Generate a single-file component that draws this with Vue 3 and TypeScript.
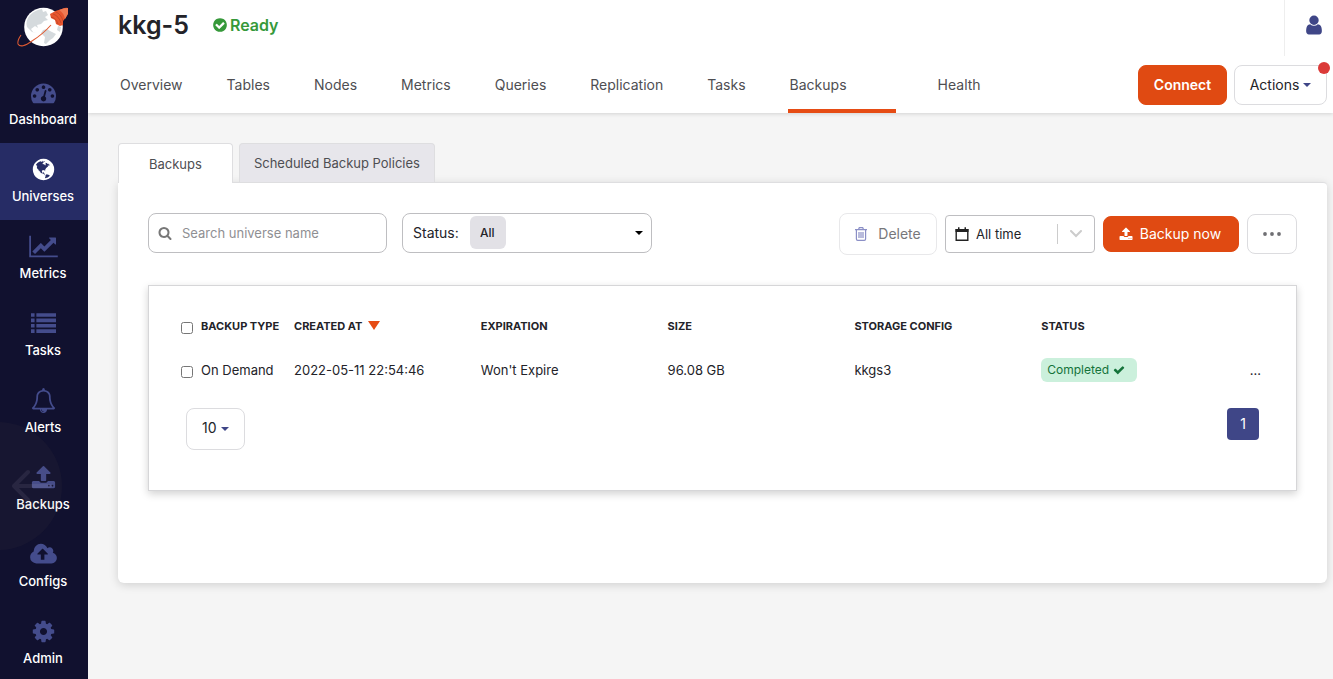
<script setup lang="ts">
import { ref, computed } from 'vue'

interface NavItem {
  label: string
  viewBox: string
  width: number
  path: string
  active?: boolean
}

interface Backup {
  type: string
  created: string
  expiration: string
  size: string
  config: string
  status: string
}

const icons = {
  upload:
    'M1344 1472q0-26-19-45t-45-19-45 19-19 45 19 45 45 19 45-19 19-45zm256 0q0-26-19-45t-45-19-45 19-19 45 19 45 45 19 45-19 19-45zm128-224v320q0 40-28 68t-68 28h-1472q-40 0-68-28t-28-68v-320q0-40 28-68t68-28h427q21 56 70.5 92t110.5 36h256q61 0 110.5-36t70.5-92h427q40 0 68 28t28 68zm-325-648q-17 40-59 40h-256v448q0 26-19 45t-45 19h-256q-26 0-45-19t-19-45v-448h-256q-42 0-59-40-17-39 14-69l448-448q18-19 45-19t45 19l448 448q31 30 14 69z',
  user:
    'M1536 1399q0 109-62.5 187t-150.5 78h-854q-88 0-150.5-78t-62.5-187q0-85 8.5-160.5t31.5-152 58.5-131 94-89 134.5-34.5q131 128 313 128t313-128q76 0 134.5 34.5t94 89 58.5 131 31.5 152 8.5 160.5zm-256-887q0 159-112.5 271.5t-271.5 112.5-271.5-112.5-112.5-271.5 112.5-271.5 271.5-112.5 271.5 112.5 112.5 271.5z',
  checkCircle:
    'M1412 734q0-28-18-46l-91-90q-19-19-45-19t-45 19l-408 407-226-226q-19-19-45-19t-45 19l-91 90q-18 18-18 46 0 27 18 45l362 362q19 19 45 19 27 0 46-19l543-543q18-18 18-45zm252 162q0 209-103 385.5t-279.5 279.5-385.5 103-385.5-103-279.5-279.5-103-385.5 103-385.5 279.5-279.5 385.5-103 385.5 103 279.5 279.5 103 385.5z',
  search:
    'M1216 832q0-185-131.5-316.5t-316.5-131.5-316.5 131.5-131.5 316.5 131.5 316.5 316.5 131.5 316.5-131.5 131.5-316.5zm512 832q0 52-38 90t-90 38q-54 0-90-38l-343-342q-179 124-399 124-143 0-273.5-55.5t-225-150-150-225-55.5-273.5 55.5-273.5 150-225 225-150 273.5-55.5 273.5 55.5 225 150 150 225 55.5 273.5q0 220-124 399l343 343q37 37 37 90z',
  check:
    'M1671 566q0 40-28 68l-724 724-136 136q-28 28-68 28t-68-28l-136-136-362-362q-28-28-28-68t28-68l136-136q28-28 68-28t68 28l294 295 656-657q28-28 68-28t68 28l136 136q28 28 28 68z',
}

const navItems: NavItem[] = [
  {
    label: 'Dashboard',
    viewBox: '0 0 1792 1792',
    width: 25,
    path: 'M384 1152q0-53-37.5-90.5t-90.5-37.5-90.5 37.5-37.5 90.5 37.5 90.5 90.5 37.5 90.5-37.5 37.5-90.5zm192-448q0-53-37.5-90.5t-90.5-37.5-90.5 37.5-37.5 90.5 37.5 90.5 90.5 37.5 90.5-37.5 37.5-90.5zm428 481l101-382q6-26-7.5-48.5t-38.5-29.5-48 6.5-30 39.5l-101 382q-60 5-107 43.5t-63 98.5q-20 77 20 146t117 89 146-20 89-117q16-60-6-117t-72-91zm660-33q0-53-37.5-90.5t-90.5-37.5-90.5 37.5-37.5 90.5 37.5 90.5 90.5 37.5 90.5-37.5 37.5-90.5zm-640-640q0-53-37.5-90.5t-90.5-37.5-90.5 37.5-37.5 90.5 37.5 90.5 90.5 37.5 90.5-37.5 37.5-90.5zm448 192q0-53-37.5-90.5t-90.5-37.5-90.5 37.5-37.5 90.5 37.5 90.5 90.5 37.5 90.5-37.5 37.5-90.5zm320 448q0 261-141 483-19 29-54 29h-1402q-35 0-54-29-141-221-141-483 0-182 71-348t191-286 286-191 348-71 348 71 286 191 191 286 71 348z',
  },
  {
    label: 'Universes',
    viewBox: '0 0 1792 1792',
    width: 25,
    active: true,
    path: 'M896 128q209 0 385.5 103t279.5 279.5 103 385.5-103 385.5-279.5 279.5-385.5 103-385.5-103-279.5-279.5-103-385.5 103-385.5 279.5-279.5 385.5-103zm274 521q-2 1-9.5 9.5t-13.5 9.5q2 0 4.5-5t5-11 3.5-7q6-7 22-15 14-6 52-12 34-8 51 11-2-2 9.5-13t14.5-12q3-2 15-4.5t15-7.5l2-22q-12 1-17.5-7t-6.5-21q0 2-6 8 0-7-4.5-8t-11.5 1-9 1q-10-3-15-7.5t-8-16.5-4-15q-2-5-9.5-11t-9.5-10q-1-2-2.5-5.5t-3-6.5-4-5.5-5.5-2.5-7 5-7.5 10-4.5 5q-3-2-6-1.5t-4.5 1-4.5 3-5 3.5q-3 2-8.5 3t-8.5 2q15-5-1-11-10-4-16-3 9-4 7.5-12t-8.5-14h5q-1-4-8.5-8.5t-17.5-8.5-13-6q-8-5-34-9.5t-33-.5q-5 6-4.5 10.5t4 14 3.5 12.5q1 6-5.5 13t-6.5 12q0 7 14 15.5t10 21.5q-3 8-16 16t-16 12q-5 8-1.5 18.5t10.5 16.5q2 2 1.5 4t-3.5 4.5-5.5 4-6.5 3.5l-3 2q-11 5-20.5-6t-13.5-26q-7-25-16-30-23-8-29 1-5-13-41-26-25-9-58-4 6-1 0-15-7-15-19-12 3-6 4-17.5t1-13.5q3-13 12-23 1-1 7-8.5t9.5-13.5.5-6q35 4 50-11 5-5 11.5-17t10.5-17q9-6 14-5.5t14.5 5.5 14.5 5q14 1 15.5-11t-7.5-20q12 1 3-17-4-7-8-9-12-4-27 5-8 4 2 8-1-1-9.5 10.5t-16.5 17.5-16-5q-1-1-5.5-13.5t-9.5-13.5q-8 0-16 15 3-8-11-15t-24-8q19-12-8-27-7-4-20.5-5t-19.5 4q-5 7-5.5 11.5t5 8 10.5 5.5 11.5 4 8.5 3q14 10 8 14-2 1-8.5 3.5t-11.5 4.5-6 4q-3 4 0 14t-2 14q-5-5-9-17.5t-7-16.5q7 9-25 6l-10-1q-4 0-16 2t-20.5 1-13.5-8q-4-8 0-20 1-4 4-2-4-3-11-9.5t-10-8.5q-46 15-94 41 6 1 12-1 5-2 13-6.5t10-5.5q34-14 42-7l5-5q14 16 20 25-7-4-30-1-20 6-22 12 7 12 5 18-4-3-11.5-10t-14.5-11-15-5q-16 0-22 1-146 80-235 222 7 7 12 8 4 1 5 9t2.5 11 11.5-3q9 8 3 19 1-1 44 27 19 17 21 21 3 11-10 18-1-2-9-9t-9-4q-3 5 .5 18.5t10.5 12.5q-7 0-9.5 16t-2.5 35.5-1 23.5l2 1q-3 12 5.5 34.5t21.5 19.5q-13 3 20 43 6 8 8 9 3 2 12 7.5t15 10 10 10.5q4 5 10 22.5t14 23.5q-2 6 9.5 20t10.5 23q-1 0-2.5 1t-2.5 1q3 7 15.5 14t15.5 13q1 3 2 10t3 11 8 2q2-20-24-62-15-25-17-29-3-5-5.5-15.5t-4.5-14.5q2 0 6 1.5t8.5 3.5 7.5 4 2 3q-3 7 2 17.5t12 18.5 17 19 12 13q6 6 14 19.5t0 13.5q9 0 20 10t17 20q5 8 8 26t5 24q2 7 8.5 13.5t12.5 9.5l16 8 13 7q5 2 18.5 10.5t21.5 11.5q10 4 16 4t14.5-2.5 13.5-3.5q15-2 29 15t21 21q36 19 55 11-2 1 .5 7.5t8 15.5 9 14.5 5.5 8.5q5 6 18 15t18 15q6-4 7-9-3 8 7 20t18 10q14-3 14-32-31 15-49-18 0-1-2.5-5.5t-4-8.5-2.5-8.5 0-7.5 5-3q9 0 10-3.5t-2-12.5-4-13q-1-8-11-20t-12-15q-5 9-16 8t-16-9q0 1-1.5 5.5t-1.5 6.5q-13 0-15-1 1-3 2.5-17.5t3.5-22.5q1-4 5.5-12t7.5-14.5 4-12.5-4.5-9.5-17.5-2.5q-19 1-26 20-1 3-3 10.5t-5 11.5-9 7q-7 3-24 2t-24-5q-13-8-22.5-29t-9.5-37q0-10 2.5-26.5t3-25-5.5-24.5q3-2 9-9.5t10-10.5q2-1 4.5-1.5t4.5 0 4-1.5 3-6q-1-1-4-3-3-3-4-3 7 3 28.5-1.5t27.5 1.5q15 11 22-2 0-1-2.5-9.5t-.5-13.5q5 27 29 9 3 3 15.5 5t17.5 5q3 2 7 5.5t5.5 4.5 5-.5 8.5-6.5q10 14 12 24 11 40 19 44 7 3 11 2t4.5-9.5 0-14-1.5-12.5l-1-8v-18l-1-8q-15-3-18.5-12t1.5-18.5 15-18.5q1-1 8-3.5t15.5-6.5 12.5-8q21-19 15-35 7 0 11-9-1 0-5-3t-7.5-5-4.5-2q9-5 2-16 5-3 7.5-11t7.5-10q9 12 21 2 7-8 1-16 5-7 20.5-10.5t18.5-9.5q7 2 8-2t1-12 3-12q4-5 15-9t13-5l17-11q3-4 0-4 18 2 31-11 10-11-6-20 3-6-3-9.5t-15-5.5q3-1 11.5-.5t10.5-1.5q15-10-7-16-17-5-43 12zm-163 877q206-36 351-189-3-3-12.5-4.5t-12.5-3.5q-18-7-24-8 1-7-2.5-13t-8-9-12.5-8-11-7q-2-2-7-6t-7-5.5-7.5-4.5-8.5-2-10 1l-3 1q-3 1-5.5 2.5t-5.5 3-4 3 0 2.5q-21-17-36-22-5-1-11-5.5t-10.5-7-10-1.5-11.5 7q-5 5-6 15t-2 13q-7-5 0-17.5t2-18.5q-3-6-10.5-4.5t-12 4.5-11.5 8.5-9 6.5-8.5 5.5-8.5 7.5q-3 4-6 12t-5 11q-2-4-11.5-6.5t-9.5-5.5q2 10 4 35t5 38q7 31-12 48-27 25-29 40-4 22 12 26 0 7-8 20.5t-7 21.5q0 6 2 16z',
  },
  {
    label: 'Metrics',
    viewBox: '0 0 2048 1792',
    width: 29,
    path: 'M2048 1536v128h-2048v-1536h128v1408h1920zm-128-1248v435q0 21-19.5 29.5t-35.5-7.5l-121-121-633 633q-10 10-23 10t-23-10l-233-233-416 416-192-192 585-585q10-10 23-10t23 10l233 233 464-464-121-121q-16-16-7.5-35.5t29.5-19.5h435q14 0 23 9t9 23z',
  },
  {
    label: 'Tasks',
    viewBox: '0 0 1792 1792',
    width: 25,
    path: 'M0 160h256v256H0zM384 160h1408v256H384zM0 544h256v256H0zM384 544h1408v256H384zM0 928h256v256H0zM384 928h1408v256H384zM0 1312h256v256H0zM384 1312h1408v256H384z',
  },
  {
    label: 'Alerts',
    viewBox: '0 0 1792 1792',
    width: 25,
    path: 'M912 1696q0-16-16-16-59 0-101.5-42.5t-42.5-101.5q0-16-16-16t-16 16q0 73 51.5 124.5t124.5 51.5q16 0 16-16zm-666-288h1300q-266-300-266-832 0-51-24-105t-69-103-121.5-80.5-169.5-31.5-169.5 31.5-121.5 80.5-69 103-24 105q0 532-266 832zm1482 0q0 52-38 90t-90 38h-448q0 106-75 181t-181 75-181-75-75-181h-448q-52 0-90-38t-38-90q50-42 91-88t85-119.5 74.5-158.5 50-206 19.5-260q0-152 117-282.5t307-158.5q-8-19-8-39 0-40 28-68t68-28 68 28 28 68q0 20-8 39 190 28 307 158.5t117 282.5q0 139 19.5 260t50 206 74.5 158.5 85 119.5 91 88z',
  },
  { label: 'Backups', viewBox: '0 0 1792 1792', width: 25, path: icons.upload },
  {
    label: 'Configs',
    viewBox: '-64 0 1920 1792',
    width: 27,
    path: 'M1216 864q0-14-9-23l-352-352q-9-9-23-9t-23 9l-351 351q-10 12-10 24 0 14 9 23t23 9h224v352q0 13 9.5 22.5t22.5 9.5h192q13 0 22.5-9.5t9.5-22.5v-352h224q13 0 22.5-9.5t9.5-22.5zm640 288q0 159-112.5 271.5t-271.5 112.5h-1088q-185 0-316.5-131.5t-131.5-316.5q0-130 70-240t188-165q-2-30-2-43 0-212 150-362t362-150q156 0 285.5 87t188.5 231q71-62 166-62 106 0 181 75t75 181q0 76-41 138 130 31 213.5 135.5t83.5 238.5z',
  },
  {
    label: 'Admin',
    viewBox: '0 0 1792 1792',
    width: 25,
    path: 'M1152 896q0-106-75-181t-181-75-181 75-75 181 75 181 181 75 181-75 75-181zm512-109v222q0 12-8 23t-20 13l-185 28q-19 54-39 91 35 50 107 138 10 12 10 25t-9 23q-27 37-99 108t-94 71q-12 0-26-9l-138-108q-44 23-91 38-16 136-29 186-7 28-36 28h-222q-14 0-24.5-8.5t-11.5-21.5l-28-184q-49-16-90-37l-141 107q-10 9-25 9-14 0-25-11-126-114-165-168-7-10-7-23 0-12 8-23 15-21 51-66.5t54-70.5q-27-50-41-99l-183-27q-13-2-21-12.5t-8-23.5v-222q0-12 8-23t19-13l186-28q14-46 39-92-40-57-107-138-10-12-10-24 0-10 9-23 26-36 98.5-107.5t94.5-71.5q13 0 26 10l138 107q44-23 91-38 16-136 29-186 7-28 36-28h222q14 0 24.5 8.5t11.5 21.5l28 184q49 16 90 37l142-107q9-9 24-9 13 0 25 10 129 119 165 170 7 8 7 22 0 12-8 23-15 21-51 66.5t-54 70.5q26 50 41 98l183 28q13 2 21 12.5t8 23.5z',
  },
]

const tabs = ['Overview', 'Tables', 'Nodes', 'Metrics', 'Queries', 'Replication', 'Tasks', 'Backups', 'Health']
const activeTab = ref('Backups')

const panels = ['Backups', 'Scheduled Backup Policies']
const activePanel = ref('Backups')

const query = ref('')
const status = ref('All')
const period = ref('All time')
const pageSize = ref('10')

const backups = ref<Backup[]>([
  {
    type: 'On Demand',
    created: '2022-05-11 22:54:46',
    expiration: "Won't Expire",
    size: '96.08 GB',
    config: 'kkgs3',
    status: 'Completed',
  },
])
const selected = ref<string[]>([])
const allSelected = computed({
  get: () => selected.value.length === backups.value.length,
  set: (on: boolean) => {
    selected.value = on ? backups.value.map((b) => b.created) : []
  },
})
</script>

<template>
  <div class="app">
    <aside class="sidebar">
      <a class="logo" href="#" aria-label="Home">
        <svg width="56" height="44" viewBox="0 0 56 44">
          <circle cx="28.500" cy="23" r="19.300" fill="#fff" />
          <g fill="#d5dadd">
            <path d="M15 11q5-5 12-6l1 3 3-1 2 4-3 2 3 3-4 1-3 3-4 1 1 3-3-2-4 3 2 3 4 1-5-1-5-5q-2-6 3-12z" />
            <path d="M28 26l4-1 3 2 6 3-3 4-3 2-4 4-2-1 1-6-4-4z" />
            <path d="M43 22l3 1-1 5-3-2z" />
          </g>
          <path d="M6 31Q2 37 3 40q3 5 14-3 11-7 19-16" fill="none" stroke="#e05a32" stroke-width="1.100" />
          <path d="M35 10q6-4 12-5 4-2 6-1v5q-2 5-5 8v4l-3 1-4-2-1-4-4-2z" fill="#e8552e" />
          <path d="M44 6q4-2 9-2v6l-3 5q-1-6-6-9z" fill="#f07a53" />
          <path d="M38 10q6 2 8 9M41 8q5 2 7 9M36 13q5 1 7 7" fill="none" stroke="#bb4427" stroke-width="0.800" />
        </svg>
      </a>
      <nav class="side-nav" aria-label="Main">
        <a
          v-for="item in navItems"
          :key="item.label"
          href="#"
          class="side-item"
          :class="{ active: item.active }"
        >
          <svg :width="item.width" height="25" :viewBox="item.viewBox" fill="currentColor" aria-hidden="true">
            <path :d="item.path" />
          </svg>
          <span>{{ item.label }}</span>
        </a>
      </nav>
      <div class="swipe" aria-hidden="true">
        <svg width="50" height="34" viewBox="0 0 50 34" fill="none" stroke="currentColor" stroke-width="4" stroke-linecap="round" stroke-linejoin="round">
          <path d="M16 3L2 17l14 14M2 17h36" />
        </svg>
      </div>
    </aside>

    <div class="content">
      <header class="header">
        <div class="title-row">
          <div class="title">
            <h1>kkg-5</h1>
            <span class="ready">
              <svg width="16" height="16" viewBox="0 0 1792 1792" fill="currentColor" aria-hidden="true"><path :d="icons.checkCircle" /></svg>
              Ready
            </span>
          </div>
          <button class="user" type="button" aria-label="Account">
            <svg width="22" height="22" viewBox="0 0 1792 1792" fill="currentColor" aria-hidden="true"><path :d="icons.user" /></svg>
          </button>
        </div>
        <div class="nav-row">
          <nav class="tabs" aria-label="Universe">
            <a
              v-for="tab in tabs"
              :key="tab"
              href="#"
              :class="{ current: tab === activeTab }"
              @click.prevent="activeTab = tab"
            >{{ tab }}</a>
          </nav>
          <div class="actions">
            <button class="btn primary connect" type="button">Connect</button>
            <button class="btn outline actions-btn" type="button">
              Actions
              <svg class="caret" width="8" height="4" viewBox="0 0 8 4" aria-hidden="true"><path d="M0 0h8L4 4z" fill="currentColor" /></svg>
              <span class="dot"></span>
            </button>
          </div>
        </div>
      </header>

      <main class="main">
        <div class="panel-tabs" role="tablist">
          <button
            v-for="p in panels"
            :key="p"
            type="button"
            role="tab"
            :aria-selected="p === activePanel"
            :class="{ selected: p === activePanel }"
            @click="activePanel = p"
          >{{ p }}</button>
        </div>
        <section class="panel">
          <div class="toolbar">
            <div class="search">
              <svg width="14" height="14" viewBox="0 0 1792 1792" fill="#777" aria-hidden="true"><path :d="icons.search" /></svg>
              <input v-model="query" type="text" placeholder="Search universe name" aria-label="Search universe name" />
            </div>
            <div class="status-field">
              <label for="status">Status:</label>
              <select id="status" v-model="status">
                <option>All</option>
                <option>Completed</option>
                <option>Failed</option>
              </select>
              <svg class="caret" width="8" height="4" viewBox="0 0 8 4" aria-hidden="true"><path d="M0 0h8L4 4z" fill="#000" /></svg>
            </div>
            <div class="spacer"></div>
            <button class="btn delete" type="button" disabled>
              <svg width="12" height="14" viewBox="0 0 12 14" fill="none" stroke="#8b8fc6" stroke-width="1.200" aria-hidden="true">
                <path d="M0 2.600h12M3.500 2.500l.8-1.800h3.400l.8 1.800M1.400 2.600v9.400q0 1.300 1.300 1.300h6.600q1.300 0 1.300-1.300V2.600M4 5v6M6 5v6M8 5v6" />
              </svg>
              Delete
            </button>
            <div class="period">
              <svg width="14" height="14" viewBox="0 0 14 14" aria-hidden="true">
                <path d="M1.200 2.600h11.600v10.600H1.200z" fill="none" stroke="#222" stroke-width="1.400" />
                <path d="M.5 2h13v3H.5zM3 .3h1.500V2H3zM9.500.3H11V2H9.500z" fill="#222" />
              </svg>
              <select v-model="period" aria-label="Time range">
                <option>All time</option>
                <option>Last 7 days</option>
                <option>Last 30 days</option>
              </select>
              <span class="rule"></span>
              <svg class="chevron" width="12" height="8" viewBox="0 0 12 8" fill="none" stroke="#ccc" stroke-width="2" stroke-linecap="round" aria-hidden="true"><path d="M1 1l5 5 5-5" /></svg>
            </div>
            <button class="btn primary backup" type="button">
              <svg width="14" height="14" viewBox="0 0 1792 1792" fill="currentColor" aria-hidden="true"><path :d="icons.upload" /></svg>
              Backup now
            </button>
            <button class="btn outline more" type="button" aria-label="More">
              <svg width="18" height="4" viewBox="0 0 18 4" fill="#6f6f73" aria-hidden="true"><circle cx="2" cy="2" r="1.900" /><circle cx="9" cy="2" r="1.900" /><circle cx="16" cy="2" r="1.900" /></svg>
            </button>
          </div>

          <div class="card">
            <table>
              <colgroup>
                <col class="c-check" />
                <col class="c-type" />
                <col span="5" />
                <col class="c-more" />
              </colgroup>
              <thead>
                <tr>
                  <th><input v-model="allSelected" type="checkbox" aria-label="Select all backups" /></th>
                  <th>BACKUP TYPE</th>
                  <th class="sorted">
                    CREATED AT
                    <svg width="12" height="9" viewBox="0 0 12 9" aria-hidden="true"><path d="M0 0h12L6 9z" fill="#e64c14" /></svg>
                  </th>
                  <th>EXPIRATION</th>
                  <th>SIZE</th>
                  <th>STORAGE CONFIG</th>
                  <th>STATUS</th>
                  <th></th>
                </tr>
              </thead>
              <tbody>
                <tr v-for="b in backups" :key="b.created">
                  <td><input v-model="selected" type="checkbox" :value="b.created" :aria-label="'Select ' + b.type" /></td>
                  <td>{{ b.type }}</td>
                  <td>{{ b.created }}</td>
                  <td>{{ b.expiration }}</td>
                  <td>{{ b.size }}</td>
                  <td>{{ b.config }}</td>
                  <td>
                    <span class="badge">
                      {{ b.status }}
                      <svg width="12" height="12" viewBox="0 0 1792 1792" fill="currentColor" aria-hidden="true"><path :d="icons.check" /></svg>
                    </span>
                  </td>
                  <td class="row-more"><button type="button" aria-label="Backup actions">...</button></td>
                </tr>
              </tbody>
            </table>
            <div class="pager">
              <div class="page-size">
                <select v-model="pageSize" aria-label="Rows per page">
                  <option>10</option>
                  <option>25</option>
                  <option>50</option>
                </select>
                <svg class="caret" width="8" height="4" viewBox="0 0 8 4" aria-hidden="true"><path d="M0 0h8L4 4z" fill="currentColor" /></svg>
              </div>
              <button class="page" type="button" aria-current="page">1</button>
            </div>
          </div>
        </section>
      </main>
    </div>
  </div>
</template>

<style>
body {
  background: #f5f5f5;
}
</style>

<style scoped>
.app,
.app * {
  box-sizing: border-box;
}
.app {
  display: flex;
  min-height: 100vh;
  font-family: Inter, "Liberation Sans", sans-serif;
  font-size: 14px;
  line-height: 20px;
  color: #232329;
}
button,
input,
select {
  font: inherit;
  color: inherit;
  margin: 0;
}
button {
  cursor: pointer;
}
a {
  text-decoration: none;
  color: inherit;
}
svg {
  display: block;
  flex: none;
}
select {
  appearance: none;
  border: 0;
  background: transparent;
  padding: 0;
  outline: none;
}

.sidebar {
  position: sticky;
  top: 0;
  flex: none;
  width: 88px;
  height: 100vh;
  overflow: hidden;
  background: #11112f;
}
.logo {
  display: flex;
  height: 66px;
  padding: 4px 0 0 15px;
}
.side-item {
  display: flex;
  flex-direction: column;
  align-items: center;
  gap: 6px;
  height: 77px;
  padding: 14px 2px 0 0;
  color: #444c8c;
}
.side-item span {
  font-size: 13px;
  line-height: 16px;
  font-weight: 500;
  color: #fff;
}
.side-item.active {
  background: #262c65;
  color: #fff;
}
.swipe {
  position: absolute;
  left: -66px;
  top: 422px;
  width: 128px;
  height: 128px;
  border-radius: 50%;
  background: rgba(120, 110, 90, 0.06);
  color: rgba(200, 190, 210, 0.1);
  display: flex;
  align-items: center;
  justify-content: flex-end;
  pointer-events: none;
}

.content {
  flex: 1;
  min-width: 0;
}
.header {
  background: #fff;
  box-shadow: 0 1px 4px rgba(0, 0, 0, 0.14);
}
.title-row {
  display: flex;
  justify-content: space-between;
  height: 56px;
  padding-left: 30px;
}
.title {
  display: flex;
  align-items: center;
  gap: 23px;
  height: 50px;
}
h1 {
  margin: 0;
  font-size: 25px;
  line-height: 32px;
  font-weight: 600;
}
.ready {
  display: flex;
  align-items: center;
  gap: 2px;
  font-size: 16px;
  font-weight: 600;
  color: #36993a;
}
.user {
  display: flex;
  width: 49px;
  padding: 14px 0 0 18px;
  border: 0;
  border-left: 1px solid #eee;
  background: none;
  color: #3f4687;
}
.nav-row {
  display: flex;
  justify-content: space-between;
  height: 57px;
  padding: 0 6px 0 30px;
}
.tabs {
  display: flex;
  gap: 40px;
}
.tabs a {
  padding: 19px 2px 14px;
  border-bottom: 4px solid transparent;
  color: #4e4e52;
}
.tabs a.current {
  width: 108px;
  border-color: #e64c14;
}
.actions {
  display: flex;
  align-items: flex-start;
  gap: 7px;
  padding-top: 9px;
}
.btn {
  display: flex;
  align-items: center;
  justify-content: center;
  border-radius: 8px;
  border: 1px solid #dcdcdf;
  background: #fff;
  padding: 0;
}
.btn.primary {
  border-color: #e04a12;
  background: #e04a12;
  color: #fff;
}
.connect {
  width: 89px;
  height: 40px;
  font-weight: 600;
}
.actions-btn {
  position: relative;
  width: 93px;
  height: 40px;
  gap: 4px;
}
.actions-btn .caret,
.page-size .caret {
  color: #3f4687;
}
.dot {
  position: absolute;
  top: -4px;
  right: -4px;
  width: 12px;
  height: 12px;
  border-radius: 50%;
  background: #db3a38;
}

.main {
  padding: 30px 6px 30px 30px;
}
.panel-tabs {
  display: flex;
  gap: 6px;
}
.panel-tabs button {
  height: 39px;
  padding: 0 14px;
  border: 1px solid #dedee0;
  border-bottom: 0;
  border-radius: 4px 4px 0 0;
  background: #e7e6eb;
  font-size: 13px;
  color: #4e4e52;
}
.panel-tabs button.selected {
  position: relative;
  z-index: 1;
  height: 40px;
  margin-bottom: -1px;
  padding: 0 30px;
  background: #fff;
}
.panel {
  min-height: 401px;
  padding: 30px;
  border-top: 1px solid #dedee0;
  border-radius: 0 4px 6px 6px;
  background: #fff;
  box-shadow: 0 2px 10px rgba(0, 0, 0, 0.15);
}
.toolbar {
  display: flex;
  align-items: center;
  gap: 8px;
  height: 42px;
}
.search {
  display: flex;
  align-self: flex-start;
  align-items: center;
  gap: 10px;
  width: 239px;
  height: 40px;
  padding: 0 10px 1px 9px;
  border: 1px solid #bebec1;
  border-radius: 8px;
}
.search input {
  flex: 1;
  min-width: 0;
  border: 0;
  padding: 0;
  outline: none;
  background: none;
  font-size: 13px;
}
.search input::placeholder {
  color: #8f8f93;
}
.status-field {
  position: relative;
  display: flex;
  align-self: flex-start;
  align-items: center;
  width: 250px;
  height: 40px;
  margin-left: 7px;
  padding: 0 8px 0 10px;
  border: 1px solid #bebec1;
  border-radius: 8px;
}
.status-field::before {
  content: "";
  position: absolute;
  left: 67px;
  top: 2px;
  width: 36px;
  height: 33px;
  border-radius: 6px;
  background: #e2e1e6;
}
.status-field label {
  width: 67px;
}
.status-field select {
  position: relative;
  flex: 1;
  min-width: 0;
  height: 38px;
  font-size: 12px;
  font-weight: 500;
}
.spacer {
  flex: 1;
}
.delete {
  width: 98px;
  height: 42px;
  gap: 11px;
  border-color: #e8e8ea;
  color: #77777b;
}
.period {
  display: flex;
  align-items: center;
  width: 150px;
  height: 38px;
  padding: 0 12px 0 9px;
  border: 1px solid #bebec1;
  border-radius: 4px;
  font-size: 13px;
}
.period select {
  flex: 1;
  min-width: 0;
  margin-left: 7px;
}
.rule {
  width: 1px;
  height: 20px;
  margin-right: 12px;
  background: #ccc;
}
.backup {
  width: 136px;
  height: 36px;
  gap: 7px;
  padding-right: 2px;
}
.more {
  width: 50px;
  height: 40px;
}

.card {
  min-height: 206px;
  margin-top: 30px;
  padding: 30px 35px 40px 32px;
  border: 1px solid #d6d6d8;
  background: #fff;
  box-shadow: 0 3px 8px rgba(0, 0, 0, 0.18);
}
table {
  width: 100%;
  table-layout: fixed;
  border-collapse: collapse;
  font-size: 13px;
}
.c-check {
  width: 20px;
}
.c-type {
  width: 93px;
}
.c-more {
  width: 33px;
}
th,
td {
  padding: 0;
  text-align: left;
  white-space: nowrap;
}
th {
  height: 20px;
  font-size: 11px;
  font-weight: 700;
}
td {
  height: 68px;
}
td input,
th input {
  display: block;
  width: 12px;
  height: 12px;
  margin-top: 3px;
}
.sorted svg {
  display: inline-block;
  margin-left: 3px;
}
.badge {
  display: inline-flex;
  align-items: center;
  gap: 4px;
  width: 96px;
  height: 24px;
  padding: 0 6px;
  border-radius: 6px;
  background: #cbf0dc;
  color: #14733a;
  font-size: 12px;
}
.row-more {
  text-align: right;
}
.row-more button {
  border: 0;
  padding: 0;
  background: none;
}
.pager {
  display: flex;
  align-items: flex-start;
  justify-content: space-between;
  margin-top: 4px;
  padding: 0 2px 0 5px;
}
.page-size {
  position: relative;
  display: flex;
  align-items: center;
  width: 59px;
  height: 42px;
  border: 1px solid #dcdcdf;
  border-radius: 8px;
}
.page-size select {
  width: 100%;
  height: 40px;
  padding: 0 0 2px 15px;
}
.page-size .caret {
  position: absolute;
  right: 15px;
  pointer-events: none;
}
.page {
  width: 32px;
  height: 32px;
  border: 0;
  padding: 0;
  border-radius: 4px;
  background: #3f4687;
  color: #fff;
}
</style>
